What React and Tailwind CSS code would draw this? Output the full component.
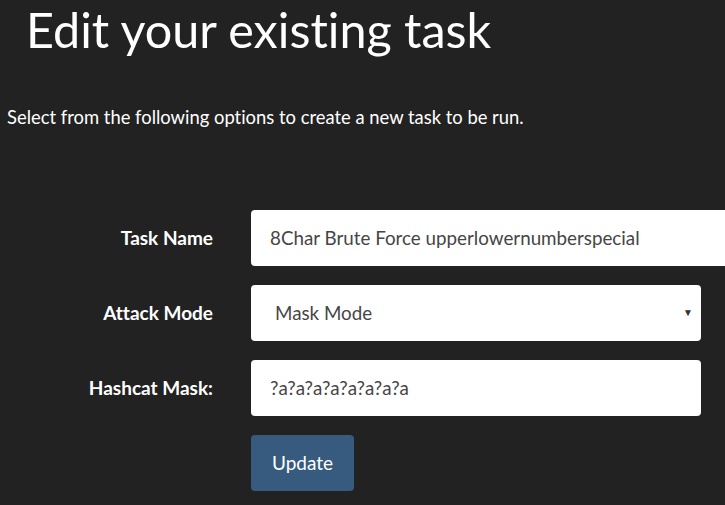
export default function App() {
  const rows = [
    { label: 'Task Name', value: '8Char Brute Force upperlowernumberspecial', kind: 'wide' },
    { label: 'Attack Mode', value: 'Mask Mode', kind: 'select' },
    { label: 'Hashcat Mask:', value: '?a?a?a?a?a?a?a?a', kind: 'input' },
  ]

  return (
    <div className="w-[725px] h-[505px] overflow-hidden bg-[#222222] text-white font-['Lato','Noto_Sans',sans-serif] [font-variant-ligatures:none]">
      <h1 className="pl-[26px] pt-[1px] text-[48.5px] leading-[56px] font-normal">Edit your existing task</h1>
      <p className="mt-[48px] pl-[7px] text-[18.4px] leading-[24px]">
        Select from the following options to create a new task to be run.
      </p>

      <form className="mt-[81px] flex flex-col gap-[19px]">
        {rows.map((row) => (
          <div key={row.label} className="flex items-center">
            <label className="w-[213px] shrink-0 text-right text-[19px] font-bold">{row.label}</label>
            <div
              className={
                'ml-[38px] h-[56px] rounded bg-white text-[#464545] text-[18.8px] flex items-center relative shrink-0 ' +
                (row.kind === 'wide' ? 'w-[520px] pl-[19px]' : 'w-[450px] pl-[19px]')
              }
            >
              <span className={row.kind === 'select' ? 'pl-[5px]' : ''}>{row.value}</span>
              {row.kind === 'select' && (
                <span className="absolute right-[8px] top-[20px] text-[10px] text-[#333]">▼</span>
              )}
            </div>
          </div>
        ))}
        <div className="pl-[251px]">
          <button
            type="button"
            className="w-[103px] h-[56px] rounded bg-[#375a7f] text-white text-[19px]"
          >
            Update
          </button>
        </div>
      </form>
    </div>
  )
}
